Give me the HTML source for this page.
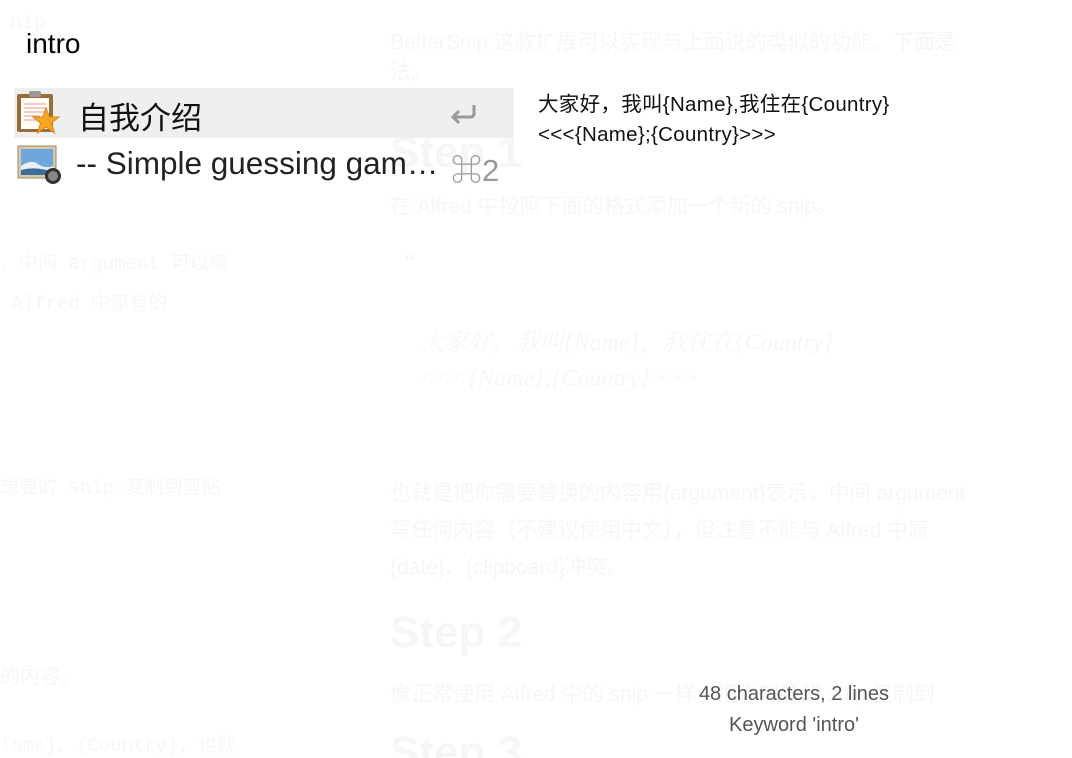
<!DOCTYPE html>
<html><head><meta charset="utf-8"><style>
html,body{margin:0;padding:0;width:1072px;height:758px;overflow:hidden;background:#fff;position:relative;font-family:"Liberation Sans","Noto Sans CJK SC",sans-serif}
.a{position:absolute;white-space:nowrap}
.f{color:#f6f6f6}
.m{font-family:"Liberation Mono","Noto Sans CJK SC",monospace}
</style></head><body>
<div class="a f m" style="left:10px;top:12px;font-size:20px">nip</div>
<div class="a f" style="left:390px;top:28px;font-size:21px;line-height:30px">BetterSnip 这款扩展可以实现与上面说的类似的功能。下面是<br>法。</div>
<div class="a f" style="left:390px;top:128px;font-size:44px;font-weight:bold">Step 1</div>
<div class="a f" style="left:390px;top:190px;font-size:21px">在 Alfred 中按照下面的格式添加一个新的 snip。</div>
<div class="a f" style="left:405px;top:248px;font-size:30px">“</div>
<div class="a f" style="left:420px;top:325px;font-size:24px;font-style:italic;font-family:'Liberation Serif','Noto Serif CJK SC',serif;line-height:36px">大家好，我叫{Name}，我住在{Country}<br>&lt;&lt;&lt;{Name};{Country}&gt;&gt;&gt;</div>
<div class="a f m" style="left:0;top:244px;font-size:19px;line-height:40px">，中间 argument 可以填<br>&nbsp;Alfred 中原有的</div>
<div class="a f m" style="left:0;top:472px;font-size:19px">想要的 snip 复制到剪贴</div>
<div class="a f" style="left:0;top:660px;font-size:20px">的内容。</div>
<div class="a f m" style="left:0;top:730px;font-size:19px">lame}、{Country}，也就</div>
<div class="a f" style="left:390px;top:475px;font-size:21px;line-height:37px">也就是把你需要替换的内容用{argument}表示，中间 argument<br>写任何内容（不建议使用中文），但注意不能与 Alfred 中原<br>{date}、{clipboard}冲突。</div>
<div class="a f" style="left:390px;top:608px;font-size:44px;font-weight:bold">Step 2</div>
<div class="a f" style="left:390px;top:678px;font-size:21px">像正常使用 Alfred 中的 snip 一样，把你想要的 snip 复制到</div>
<div class="a f" style="left:390px;top:728px;font-size:44px;font-weight:bold">Step 3</div>

<div class="a" style="left:26px;top:28px;font-size:28px;color:#000">intro</div>
<div class="a" style="left:14px;top:88px;width:500px;height:50px;background:#efefef"></div>
<svg class="a" style="left:15px;top:90px" width="46" height="46" viewBox="0 0 46 46">
<rect x="2" y="4" width="36" height="38" rx="2" fill="#9b6b3a"/>
<rect x="6" y="8" width="28" height="31" fill="#fffdf5"/>
<g stroke="#e39a9a" stroke-width="1"><line x1="9" y1="14" x2="31" y2="14"/><line x1="9" y1="18" x2="31" y2="18"/><line x1="9" y1="22" x2="31" y2="22"/><line x1="9" y1="26" x2="25" y2="26"/><line x1="9" y1="30" x2="22" y2="30"/></g>
<rect x="14" y="1" width="12" height="6" rx="2" fill="#999"/>
<polygon points="31,18 34.5,27 44,27 36.5,33 39.5,43 31,37 22.5,43 25.5,33 18,27 27.5,27" fill="#f6a623" stroke="#d9861a" stroke-width="1"/>
</svg>
<div class="a" style="left:78px;top:93px;font-size:31px;color:#111">自我介绍</div>
<svg class="a" style="left:448px;top:101px" width="32" height="26" viewBox="0 0 32 26"><path d="M26 4 V12 Q26 16 22 16 H6" fill="none" stroke="#999" stroke-width="3"/><path d="M11 10 L5 16 L11 22" fill="none" stroke="#999" stroke-width="3"/></svg>
<svg class="a" style="left:16px;top:144px" width="46" height="42" viewBox="0 0 46 42">
<rect x="2" y="2" width="38" height="32" fill="#d8c9a8" stroke="#a08a60"/>
<rect x="5" y="5" width="32" height="26" fill="#6fa6dc"/>
<path d="M5 22 Q15 15 22 20 T37 22 V31 H5Z" fill="#e8eef2"/>
<path d="M5 26 Q20 22 37 28 V31 H5Z" fill="#3d6e9a"/>
<circle cx="37" cy="32" r="8" fill="#333"/><circle cx="37" cy="32" r="5" fill="#888"/>
</svg>
<div class="a" style="left:76px;top:145px;font-size:31.5px;color:#222">-- Simple guessing gam…</div>
<div class="a" style="left:451px;top:145px;font-size:31px;color:#999">⌘2</div>
<div class="a" style="left:538px;top:90px;font-size:20.5px;letter-spacing:0.3px;line-height:30px;color:#111">大家好，我叫{Name},我住在{Country}<br>&lt;&lt;&lt;{Name};{Country}&gt;&gt;&gt;</div>
<div class="a" style="left:664px;top:679px;font-size:20px;color:#555;text-align:center;width:260px;line-height:31px">48 characters, 2 lines<br>Keyword 'intro'</div>
</body></html>
